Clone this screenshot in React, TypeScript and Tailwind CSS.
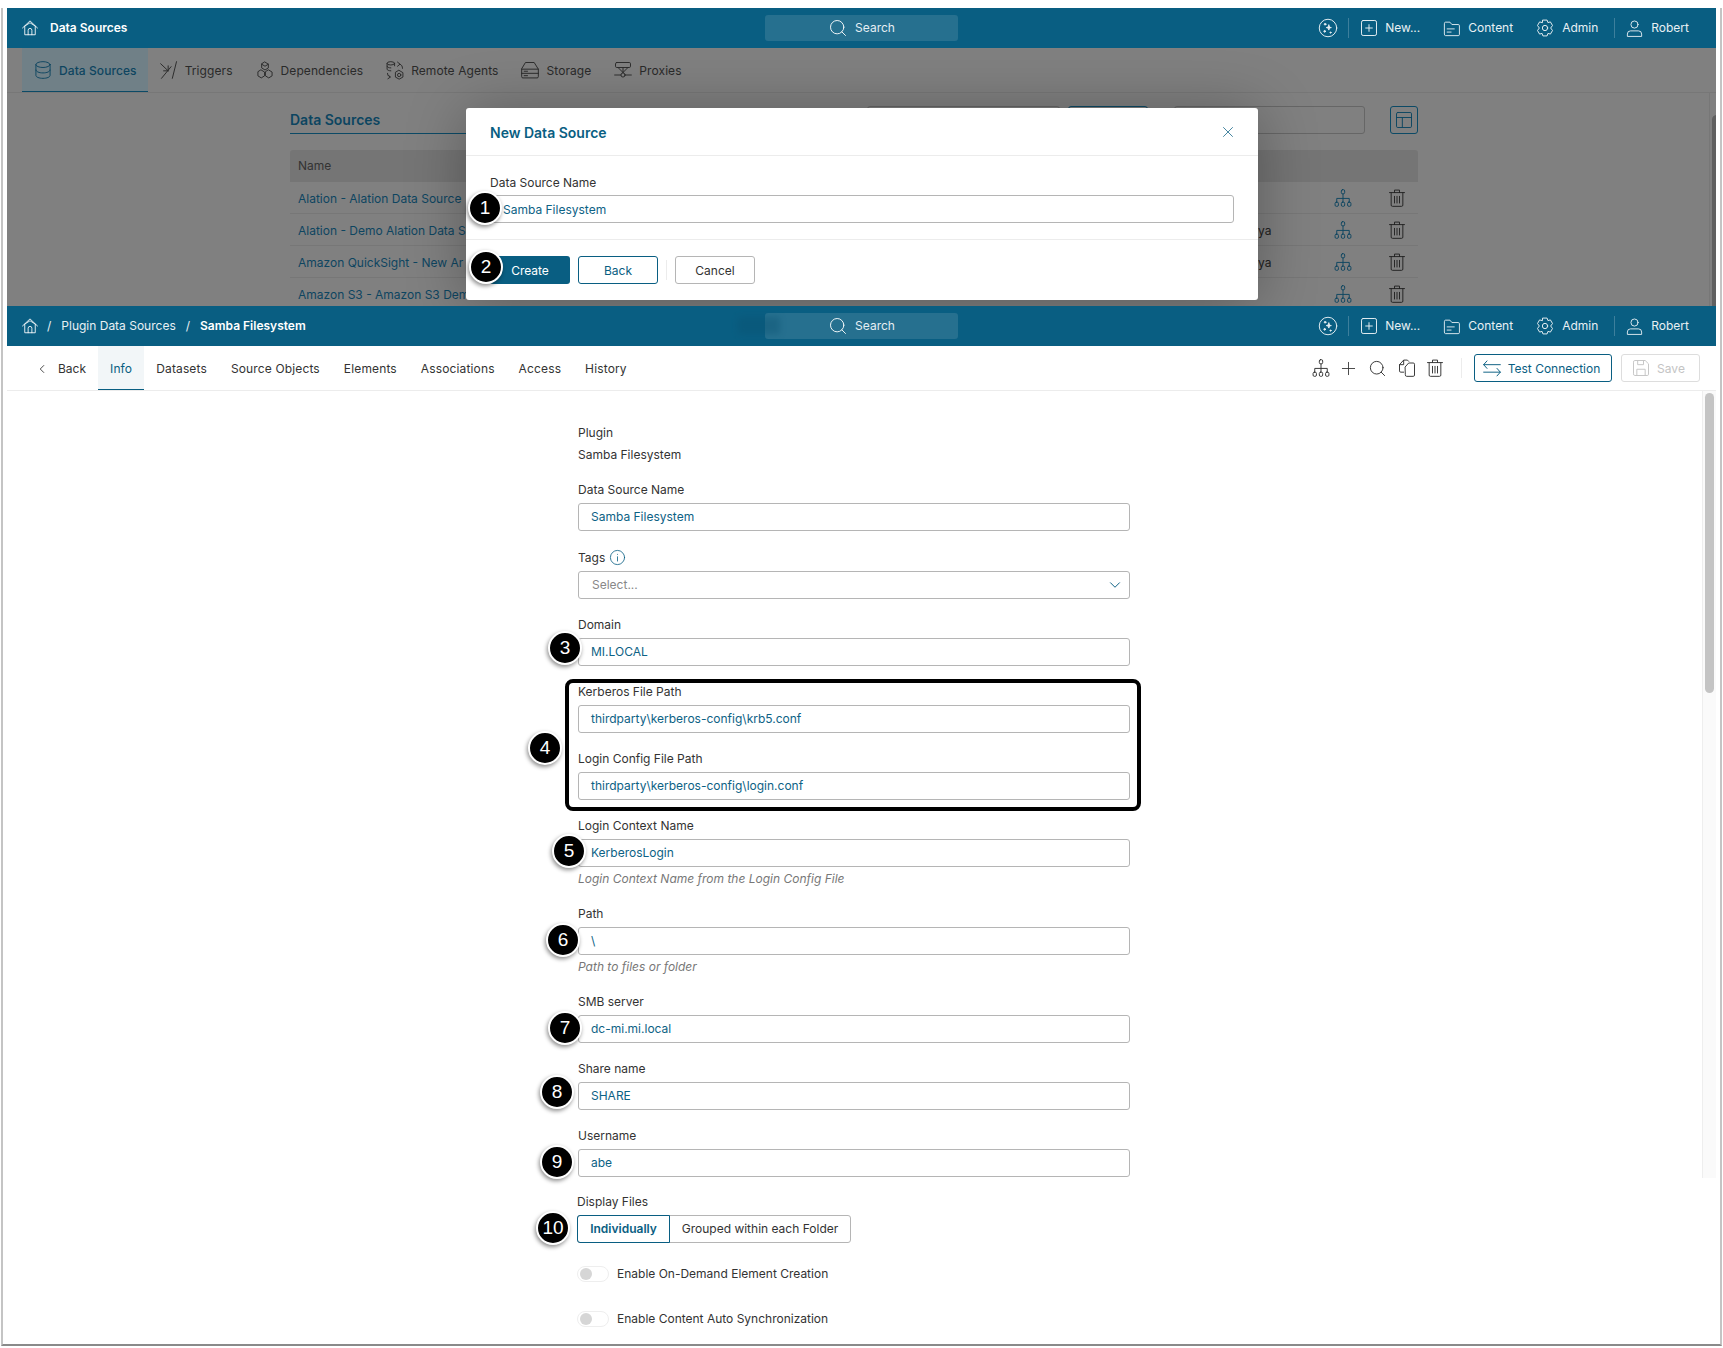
import { ChevronDown, ChevronLeft, Plus, Search, X } from 'lucide-react';

type IconProps = { className?: string };

function Svg({ className, children }: IconProps & { children: React.ReactNode }) {
  return (
    <svg viewBox="0 0 24 24" fill="none" stroke="currentColor" strokeWidth={1.15} strokeLinecap="round" strokeLinejoin="round" className={className}>
      {children}
    </svg>
  );
}

const HomeIcon = ({ className }: IconProps) => (
  <Svg className={className}>
    <path d="M2 12 12 2.500 22 12" />
    <path d="M5 9.500 12 5l7 4.500" />
    <path d="M5 10v11h14V10" />
    <path d="M9.500 21v-6a2.500 2.500 0 0 1 5 0v6" />
  </Svg>
);

const AiIcon = ({ className }: IconProps) => (
  <Svg className={className}>
    <circle cx="12" cy="12" r="10.500" />
    <path d="M13 8.500c.4 2 1 2.700 3 3-2 .4-2.600 1-3 3-.4-2-1-2.600-3-3 2-.3 2.600-1 3-3Z" fill="currentColor" />
    <circle cx="8.500" cy="7.500" r="1" fill="currentColor" />
    <circle cx="8" cy="16" r="1" fill="currentColor" />
    <circle cx="15" cy="17.500" r=".7" fill="currentColor" />
  </Svg>
);

const NewIcon = ({ className }: IconProps) => (
  <Svg className={className}>
    <rect x="3" y="3" width="18" height="18" rx="2" />
    <path d="M12 8v8M8 12h8" />
  </Svg>
);

const ContentIcon = ({ className }: IconProps) => (
  <Svg className={className}>
    <path d="M3 5.500a1.500 1.500 0 0 1 1.500-1.500h5.500l2.500 3h8A1.500 1.500 0 0 1 22 8.500v11a1.500 1.500 0 0 1-1.500 1.500h-16A1.500 1.500 0 0 1 3 19.500Z" />
    <path d="M6.500 12.500h9M6.500 16.500h5" />
  </Svg>
);

const AdminIcon = ({ className }: IconProps) => (
  <Svg className={className}>
    <circle cx="12" cy="12" r="3.200" />
    <path d="M9.500 2.500h5l1 3 3-.8 2.500 4.300-2.200 3 2.200 3-2.500 4.300-3-.8-1 3h-5l-1-3-3 .8L3 15l2.200-3L3 9l2.500-4.300 3 .8Z" />
  </Svg>
);

const UserIcon = ({ className }: IconProps) => (
  <Svg className={className}>
    <circle cx="12" cy="7" r="4.500" />
    <path d="M3 21.500v-2.500a4 4 0 0 1 4-4h10a4 4 0 0 1 4 4v2.500Z" />
  </Svg>
);

const DatabaseIcon = ({ className }: IconProps) => (
  <Svg className={className}>
    <ellipse cx="12" cy="5.500" rx="8.500" ry="3.500" />
    <path d="M3.500 5.500v13c0 2 3.800 3.500 8.500 3.500s8.500-1.500 8.500-3.500v-13" />
    <path d="M3.500 12c0 2 3.800 3.500 8.500 3.500s8.500-1.500 8.500-3.500" />
  </Svg>
);

const TriggersIcon = ({ className }: IconProps) => (
  <Svg className={className}>
    <path d="M2 4.500 11 13M11 7v6H5.500" />
    <path d="M3 22 14.500 8" />
    <path d="M21 2 16 22" />
  </Svg>
);

const DependenciesIcon = ({ className }: IconProps) => (
  <Svg className={className}>
    <path d="M12 2.500 16 5v4.500l-4 2.500-4-2.500V5Z" />
    <path d="M7.500 12 11.500 14.500V19l-4 2.500-4-2.500v-4.500Z" />
    <path d="M16.500 12l4 2.500V19l-4 2.500-4-2.500v-4.500Z" />
    <path d="M8 5l4 2.500L16 5" />
  </Svg>
);

const RemoteAgentsIcon = ({ className }: IconProps) => (
  <Svg className={className}>
    <ellipse cx="7" cy="4" rx="4.500" ry="2" />
    <path d="M2.500 4v7c0 1 2 2 4.500 2M11.500 4v3M2.500 7.500c0 1 2 2 4.500 2" />
    <path d="M15 2.500l3 2.500-3 2.500M18 5c2 1 3 2.500 3 5" />
    <path d="M3 16c0 2 1 3.500 3 4.500M3.500 22.500 6.500 20.500 4 18" />
    <circle cx="17" cy="18" r="2" />
    <path d="M17 12.500l4.500 2.700v5.300L17 23l-4.500-2.500v-5.300Z" />
  </Svg>
);

const StorageIcon = ({ className }: IconProps) => (
  <Svg className={className}>
    <path d="M7 3h10l5 8v9a1.500 1.500 0 0 1-1.500 1.500h-17A1.500 1.500 0 0 1 2 20v-9Z" />
    <path d="M2 11h20M2 16h20M5 13.500h4M5 18.800h4" />
  </Svg>
);

const ProxiesIcon = ({ className }: IconProps) => (
  <Svg className={className}>
    <rect x="3" y="3" width="18" height="6" rx="1.500" />
    <path d="M12 9v6M6 9l6 6M18 9l-6 6" />
    <circle cx="12" cy="18" r="2.500" />
    <path d="M2 18h7.500M14.500 18H22" />
  </Svg>
);

const OrgIcon = ({ className }: IconProps) => (
  <Svg className={className}>
    <rect x="10" y="2" width="4" height="5" rx="1.500" />
    <rect x="2.500" y="17" width="4" height="5" rx="1.500" />
    <rect x="10" y="17" width="4" height="5" rx="1.500" />
    <rect x="17.500" y="17" width="4" height="5" rx="1.500" />
    <path d="M12 7v10M4.500 17v-4.500h15V17" />
  </Svg>
);

const TrashIcon = ({ className }: IconProps) => (
  <Svg className={className}>
    <path d="M3 5.500h18M9 5.500V2.500h6v3" />
    <path d="M5 5.500v15A1.500 1.500 0 0 0 6.500 22h11a1.500 1.500 0 0 0 1.500-1.500v-15" />
    <path d="M9 10v8M12 10v8M15 10v8" />
  </Svg>
);

const CopyIcon = ({ className }: IconProps) => (
  <Svg className={className}>
    <path d="M8 17H4.500A1.500 1.500 0 0 1 3 15.500V8l5-5.500h4.500L14 4" />
    <path d="M8 3v5H3" />
    <path d="M10 10.500 14 6h5.500A1.500 1.500 0 0 1 21 7.500v13a1.500 1.500 0 0 1-1.500 1.500h-8A1.500 1.500 0 0 1 10 20.500Z" />
  </Svg>
);

const SwapIcon = ({ className }: IconProps) => (
  <Svg className={className}>
    <path d="M22 8H2M6 3.500 2 8l4 4.500" />
    <path d="M2 17h20M18 12.500l4 4.500-4 4.500" />
  </Svg>
);

const SaveIcon = ({ className }: IconProps) => (
  <Svg className={className}>
    <path d="M3 4.500A1.500 1.500 0 0 1 4.500 3H17l4 4v12.500a1.500 1.500 0 0 1-1.500 1.500h-15A1.500 1.500 0 0 1 3 19.500Z" />
    <path d="M7 21v-7.500h10V21M8 3v5h7V3" />
  </Svg>
);

const InfoIcon = ({ className }: IconProps) => (
  <Svg className={className}>
    <circle cx="12" cy="12" r="10" />
    <path d="M12 11v6M12 7.500v.1" />
  </Svg>
);

const TableIcon = ({ className }: IconProps) => (
  <Svg className={className}>
    <rect x="3" y="3" width="18" height="18" rx="1.500" />
    <path d="M3 9h18M10 9v12" />
  </Svg>
);

function TopBar({ children }: { children: React.ReactNode }) {
  return (
    <header className="grid h-10 shrink-0 grid-cols-[1fr_193px_1fr] items-center bg-[#095e82] text-xs text-white">
      <div className="flex items-center pl-[14px]">
        <HomeIcon className="mr-[11px] h-[18px] w-[18px]" />
        {children}
      </div>
      <div className="flex h-[26px] items-center justify-center gap-[7px] rounded-[3px] bg-[#26708f]">
        <Search className="h-5 w-5" strokeWidth={1.1} />
        <span className="text-[#e4eef3]">Search</span>
      </div>
      <div className="flex items-center justify-end pr-[27px] text-[#e8f0f4]">
        <AiIcon className="h-5 w-5" />
        <span className="mx-[10px] h-5 w-px bg-[#3d7f9c]" />
        <NewIcon className="h-5 w-5" />
        <span className="ml-[6px]">New...</span>
        <ContentIcon className="ml-[22px] h-[19px] w-[19px]" />
        <span className="ml-[7px]">Content</span>
        <AdminIcon className="ml-[22px] h-5 w-5" />
        <span className="ml-[7px]">Admin</span>
        <span className="ml-[16px] mr-[10px] h-5 w-px bg-[#3d7f9c]" />
        <UserIcon className="h-[19px] w-[19px]" />
        <span className="ml-[7px]">Robert</span>
      </div>
    </header>
  );
}

const dimTabs = [
  { label: 'Data Sources', Icon: DatabaseIcon, active: true },
  { label: 'Triggers', Icon: TriggersIcon },
  { label: 'Dependencies', Icon: DependenciesIcon },
  { label: 'Remote Agents', Icon: RemoteAgentsIcon },
  { label: 'Storage', Icon: StorageIcon },
  { label: 'Proxies', Icon: ProxiesIcon },
];

// names as far as they show beside the dialog
const dimRows = [
  { name: 'Alation - Alation Data Source', owner: '' },
  { name: 'Alation - Demo Alation Data S', owner: 'ya' },
  { name: 'Amazon QuickSight - New Ar', owner: 'ya' },
  { name: 'Amazon S3 - Amazon S3 Dem', owner: '' },
];

function DimmedPage() {
  return (
    <div className="relative h-[298px] shrink-0 overflow-hidden bg-[#808080]">
      <TopBar>
        <span className="font-semibold">Data Sources</span>
      </TopBar>

      <nav className="flex h-[45px] border-b border-[#777] pl-[15px] text-xs tracking-[0.08px] text-[#2a2a2a]">
        {dimTabs.map(({ label, Icon, active }) => (
          <div
            key={label}
            className={`flex items-center gap-[6px] px-[11px] ${active ? 'border-b border-[#0c4a66] bg-[#708087] font-medium text-[#0e4560]' : ''}`}
          >
            <Icon className="h-5 w-5" />
            <span className="pt-[2px]">{label}</span>
          </div>
        ))}
      </nav>

      <div className="flex">
        <div className="ml-[283px] w-[1128px]">
          <div className="mt-[13px] flex h-7 items-center">
            <div className="flex h-7 w-[176px] items-center border-b border-[#0c4a66] text-sm font-semibold text-[#0c4560]">
              Data Sources
            </div>
            <div className="ml-[401px] h-7 w-[194px] rounded-[3px] border border-[#666]" />
            <div className="ml-[8px] h-7 w-[80px] rounded-[3px] border border-[#0c4a66]" />
            <div className="ml-[26px] h-7 w-[191px] rounded-[3px] border border-[#666]" />
            <div className="ml-[25px] flex h-7 w-7 items-center justify-center rounded-[3px] border border-[#0c4a66] text-[#0c4560]">
              <TableIcon className="h-5 w-5" />
            </div>
          </div>

          <div className="mt-[16px] flex h-8 items-center rounded-t-[3px] bg-[#757575] px-2 text-xs text-[#333]">Name</div>
          {dimRows.map(row => (
            <div key={row.name} className="flex h-8 items-center border-b border-[#777] pl-2 text-xs text-[#0e4560]">
              <span className="w-[168px] whitespace-nowrap pt-[2px]">{row.name}</span>
              <span className="ml-[792px] w-[75px] pt-[2px] text-[#222]">{row.owner}</span>
              <OrgIcon className="h-5 w-5" />
              <TrashIcon className="ml-[34px] h-5 w-5 text-[#222]" />
            </div>
          ))}
        </div>
        <aside className="ml-[291px] w-[14px] border-l border-[#777] pl-[2px]">
          <div className="mt-[22px] h-[300px] w-[9px] rounded-full bg-[#606060]" />
        </aside>
      </div>

      <div className="absolute left-[459px] top-[100px] w-[792px] rounded-[3px] bg-white text-xs shadow-[0_4px_60px_rgba(0,0,0,0.3)]">
        <div className="flex h-12 items-center justify-between border-b border-[#ececec] px-6">
          <h2 className="pt-[3px] text-sm font-semibold text-[#095e82]">New Data Source</h2>
          <X className="mr-[-3px] h-[18px] w-[18px] text-[#095e82]" strokeWidth={1} />
        </div>
        <div className="h-[84px] border-b border-[#ececec] px-6 pt-[19px]">
          <div className="mb-1 leading-4 text-[#333]">Data Source Name</div>
          <div className="flex h-7 items-center rounded-[3px] border border-[#b5b5b5] pl-[12px] pt-px text-[#0d6285]">Samba Filesystem</div>
        </div>
        <div className="flex h-[60px] items-center px-6">
          <button className="flex h-7 w-[80px] items-center justify-center rounded-[3px] bg-[#095e82] pt-px text-white">Create</button>
          <button className="ml-2 flex h-7 w-[80px] items-center justify-center rounded-[3px] border border-[#095e82] pt-px text-[#095e82]">Back</button>
          <span className="mx-2 h-5 w-px bg-[#ececec]" />
          <button className="flex h-7 w-[80px] items-center justify-center rounded-[3px] border border-[#b5b5b5] pt-px text-[#333]">Cancel</button>
        </div>
      </div>
    </div>
  );
}

const formTabs = ['Info', 'Datasets', 'Source Objects', 'Elements', 'Associations', 'Access', 'History'];

function Field({ label, value, help }: { label: string; value: string; help?: string }) {
  return (
    <div className={help ? 'mb-[19px]' : 'mb-[18px]'}>
      <div className="mb-[5px] leading-4 text-[#333]">{label}</div>
      <div className="flex h-7 items-center rounded-[3px] border border-[#b5b5b5] pl-[12px] text-[#0d6285]">{value}</div>
      {help && <div className="mt-[4px] leading-4 text-[#777] italic">{help}</div>}
    </div>
  );
}

function Toggle({ label }: { label: string }) {
  return (
    <div className="flex h-4 items-center gap-2 text-[#333]">
      <span className="flex h-4 w-8 items-center rounded-full border border-[#eee] bg-white pl-[2px]">
        <span className="h-3 w-3 rounded-full bg-[#d6d6d6]" />
      </span>
      {label}
    </div>
  );
}

function DataSourceForm() {
  return (
    <div className="flex min-h-0 flex-1 flex-col">
      <div className="relative">
        <TopBar>
          <div className="-ml-[3px] flex items-center gap-[10px] text-[#e8f0f4]">
            <span>/</span>
            <span>Plugin Data Sources</span>
            <span>/</span>
            <span className="font-semibold text-white">Samba Filesystem</span>
          </div>
        </TopBar>
        {/* leftover shadow where the two captures were stitched */}
        <div className="absolute left-[731px] top-[11px] h-[17px] w-[42px] bg-[#0b5272] opacity-40 blur-[3px]" />
      </div>

      <nav className="flex h-[45px] shrink-0 items-stretch border-b border-[#ececec] text-xs text-[#333]">
        <div className="flex items-center pl-[28px] pr-[12px] pt-[2px]">
          <ChevronLeft className="h-[14px] w-[14px]" strokeWidth={1.5} />
          <span className="ml-[9px]">Back</span>
        </div>
        {formTabs.map(tab => (
          <div
            key={tab}
            className={`flex items-center px-3 pt-[2px] tracking-[0.14px] ${tab === 'Info' ? 'border-b border-[#095e82] bg-[#f2f6f8] text-[#095e82]' : ''}`}
          >
            {tab}
          </div>
        ))}
        <div className="ml-auto flex items-center pr-[16px]">
          <OrgIcon className="h-5 w-5" />
          <Plus className="ml-[7px] h-[21px] w-[21px]" strokeWidth={1} />
          <Search className="ml-[9px] h-[19px] w-[19px]" strokeWidth={1.2} />
          <CopyIcon className="ml-[10px] h-5 w-5" />
          <TrashIcon className="ml-[8px] h-5 w-5" />
          <span className="ml-[16px] mr-[12px] h-5 w-px bg-[#ececec]" />
          <button className="flex h-7 w-[138px] items-center justify-center gap-[6px] rounded-[3px] border border-[#095e82] pr-[4px] text-[#095e82]">
            <SwapIcon className="h-5 w-5" />
            <span className="pt-px">Test Connection</span>
          </button>
          <button className="ml-[9px] flex h-7 w-[79px] items-center justify-center gap-[6px] rounded-[3px] border border-[#ddd] pr-[5px] text-[#c4c4c4]">
            <SaveIcon className="h-5 w-5" />
            <span className="pt-px">Save</span>
          </button>
        </div>
      </nav>

      <div className="flex flex-1 items-start">
        <main className="ml-[571px] w-[552px] pt-[34px] text-xs">
          <div className="mb-[19px]">
            <div className="mb-[6px] leading-4 text-[#333]">Plugin</div>
            <div className="leading-4 text-[#333]">Samba Filesystem</div>
          </div>
          <Field label="Data Source Name" value="Samba Filesystem" />
          <div className="mb-[18px]">
            <div className="mb-[5px] flex items-center gap-[4px] leading-4 text-[#333]">
              Tags
              <InfoIcon className="h-[17px] w-[17px] text-[#095e82]" />
            </div>
            <div className="flex h-7 items-center justify-between rounded-[3px] border border-[#b5b5b5] pl-[13px] pr-[5px] text-[#888]">
              Select...
              <ChevronDown className="h-[18px] w-[18px] text-[#095e82]" strokeWidth={1.3} />
            </div>
          </div>
          <Field label="Domain" value="MI.LOCAL" />
          <Field label="Kerberos File Path" value="thirdparty\kerberos-config\krb5.conf" />
          <Field label="Login Config File Path" value="thirdparty\kerberos-config\login.conf" />
          <Field label="Login Context Name" value="KerberosLogin" help="Login Context Name from the Login Config File" />
          <Field label="Path" value="\" help="Path to files or folder" />
          <Field label="SMB server" value="dc-mi.mi.local" />
          <Field label="Share name" value="SHARE" />
          <Field label="Username" value="abe" />

          <div className="-ml-px -mt-px">
            <div className="mb-[5px] leading-4 text-[#333]">Display Files</div>
            <div className="flex h-7 w-[274px] rounded-[3px] border border-[#b5b5b5]">
              <div className="-m-px flex w-[93px] items-center justify-center rounded-l-[3px] border border-[#095e82] font-semibold text-[#095e82]">Individually</div>
              <div className="flex flex-1 items-center justify-center pl-px text-[#333]">Grouped within each Folder</div>
            </div>
            <div className="mt-[23px] flex flex-col gap-[29px]">
              <Toggle label="Enable On-Demand Element Creation" />
              <Toggle label="Enable Content Auto Synchronization" />
            </div>
          </div>
        </main>
        <aside className="ml-auto h-[787px] w-[14px] border-l border-[#eee] bg-[#fafafa] pl-[2px]">
          <div className="mt-[2px] h-[300px] w-[9px] rounded-full bg-[#c4c4c4]" />
        </aside>
      </div>
    </div>
  );
}

const badges = [
  { n: 1, x: 485, y: 208 },
  { n: 2, x: 486, y: 267 },
  { n: 3, x: 565, y: 648 },
  { n: 4, x: 545, y: 748 },
  { n: 5, x: 569, y: 851 },
  { n: 6, x: 563, y: 940 },
  { n: 7, x: 565, y: 1028 },
  { n: 8, x: 557, y: 1092 },
  { n: 9, x: 557, y: 1162 },
  { n: 10, x: 553, y: 1228 },
];

export default function App() {
  return (
    <div className="relative h-[1348px] w-[1723px] overflow-hidden bg-white pt-2 font-['Inter',sans-serif]">
      <div className="mx-px mb-[2px] flex h-[1338px] flex-col border-x-2 border-b-2 border-x-[#c4c4c4] border-b-[#8a8a8a] px-1">
        <DimmedPage />
        <DataSourceForm />
      </div>

      {/* callouts drawn on top of the screenshot */}
      <div className="absolute left-[565px] top-[679px] h-[132px] w-[576px] rounded-[8px] border-4 border-black" />
      {badges.map(b => (
        <div
          key={b.n}
          className="absolute flex h-[34px] w-[34px] -translate-x-1/2 -translate-y-1/2 items-center justify-center rounded-full border-2 border-white bg-black font-['Liberation_Sans',sans-serif] text-[19px] text-white shadow-[-1px_2px_4px_rgba(0,0,0,0.45)]"
          style={{ left: b.x, top: b.y }}
        >
          {b.n}
        </div>
      ))}
    </div>
  );
}
